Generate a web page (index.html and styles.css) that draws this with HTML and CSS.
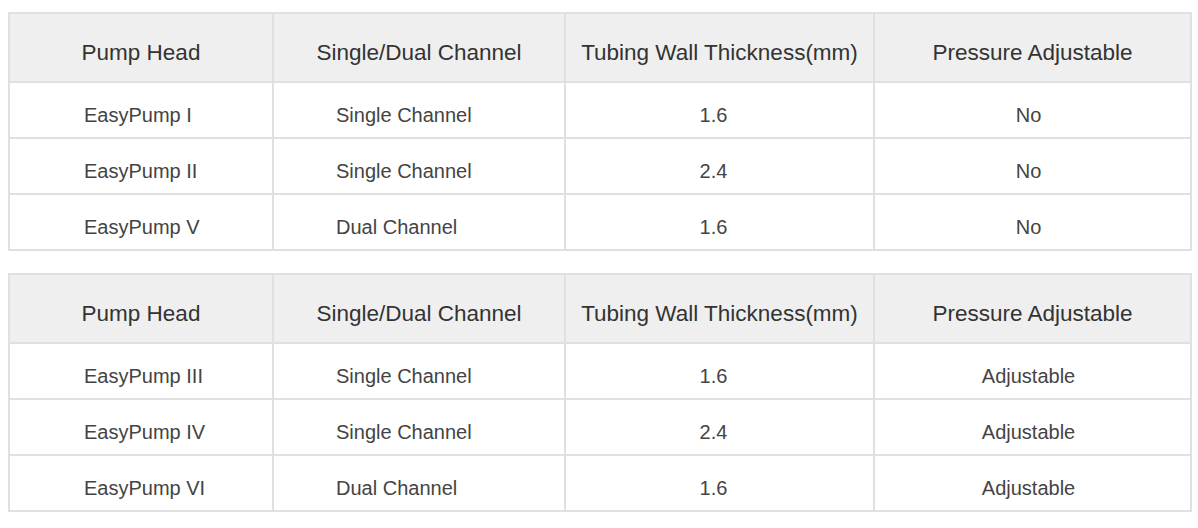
FILE: index.html
```html
<!DOCTYPE html>
<html lang="en">
<head>
<meta charset="utf-8">
<title>Pump Heads</title>
<link rel="stylesheet" href="styles.css">
</head>
<body>
<div class="page">
  <table class="spec">
    <colgroup><col class="c1"><col class="c2"><col class="c3"><col class="c4"></colgroup>
    <thead>
      <tr><th>Pump Head</th><th>Single/Dual Channel</th><th>Tubing Wall Thickness(mm)</th><th>Pressure Adjustable</th></tr>
    </thead>
    <tbody>
      <tr><td class="name">EasyPump I</td><td class="chan">Single Channel</td><td class="num">1.6</td><td class="adj">No</td></tr>
      <tr><td class="name">EasyPump II</td><td class="chan">Single Channel</td><td class="num">2.4</td><td class="adj">No</td></tr>
      <tr><td class="name">EasyPump V</td><td class="chan">Dual Channel</td><td class="num">1.6</td><td class="adj">No</td></tr>
    </tbody>
  </table>
  <table class="spec">
    <colgroup><col class="c1"><col class="c2"><col class="c3"><col class="c4"></colgroup>
    <thead>
      <tr><th>Pump Head</th><th>Single/Dual Channel</th><th>Tubing Wall Thickness(mm)</th><th>Pressure Adjustable</th></tr>
    </thead>
    <tbody>
      <tr><td class="name">EasyPump III</td><td class="chan">Single Channel</td><td class="num">1.6</td><td class="adj">Adjustable</td></tr>
      <tr><td class="name">EasyPump IV</td><td class="chan">Single Channel</td><td class="num">2.4</td><td class="adj">Adjustable</td></tr>
      <tr><td class="name">EasyPump VI</td><td class="chan">Dual Channel</td><td class="num">1.6</td><td class="adj">Adjustable</td></tr>
    </tbody>
  </table>
</div>
</body>
</html>
```
FILE: styles.css
```css
html, body {
  margin: 0;
  padding: 0;
  background: #ffffff;
}
body {
  padding: 0 8px;
  font-family: "Liberation Sans", Arial, sans-serif;
}
.page {
  display: flex;
  flex-direction: column;
  gap: 22px;
  padding-top: 12px;
}
.spec {
  width: 100%;
  border-collapse: collapse;
  table-layout: fixed;
  border: 2px solid #e0e0e0;
}
.c1 { width: 264px; }
.c2 { width: 292px; }
.c3 { width: 309px; }
.c4 { width: 317px; }
.spec th,
.spec td {
  border: 2px solid #e0e0e0;
  vertical-align: middle;
  padding: 0;
  white-space: nowrap;
}
.spec th {
  background: #efefef;
  color: #333333;
  font-size: 22.5px;
  font-weight: normal;
  height: 56px;
  padding-top: 11px;
  text-align: center;
}
.spec td {
  color: #444444;
  font-size: 20px;
  height: 44px;
  padding-top: 10px;
}
.spec td.name {
  text-align: left;
  padding-left: 74px;
}
.spec td.chan {
  text-align: left;
  padding-left: 62px;
}
.spec td.num {
  text-align: center;
  padding-right: 12px;
}
.spec td.adj {
  text-align: center;
  padding-right: 8px;
}
```
